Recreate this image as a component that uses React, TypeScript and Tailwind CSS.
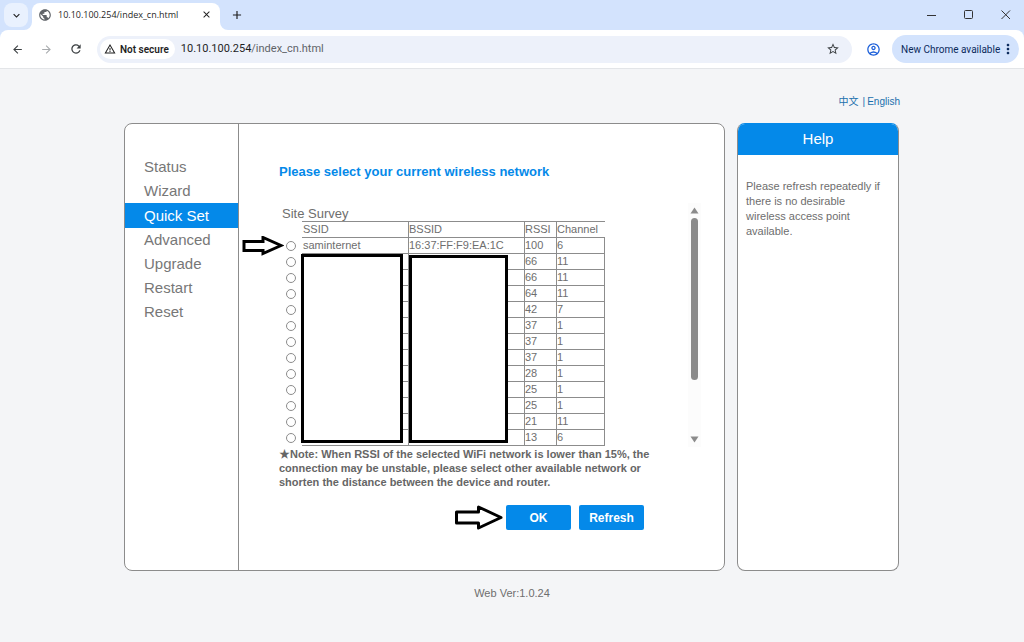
import { Fragment } from "react";
import {
  MdAdd,
  MdArrowBack,
  MdArrowForward,
  MdClose,
  MdKeyboardArrowDown,
  MdMoreVert,
  MdOutlineAccountCircle,
  MdPublic,
  MdRefresh,
  MdStarBorder,
  MdWarningAmber,
} from "react-icons/md";

type Network = {
  ssid: string;
  bssid: string;
  rssi: number;
  channel: number;
};

const menu = ["Status", "Wizard", "Quick Set", "Advanced", "Upgrade", "Restart", "Reset"];

const hidden = (rssi: number, channel: number): Network => ({ ssid: "", bssid: "", rssi, channel });

const networks: Network[] = [
  { ssid: "saminternet", bssid: "16:37:FF:F9:EA:1C", rssi: 100, channel: 6 },
  hidden(66, 11),
  hidden(66, 11),
  hidden(64, 11),
  hidden(42, 7),
  hidden(37, 1),
  hidden(37, 1),
  hidden(37, 1),
  hidden(28, 1),
  hidden(25, 1),
  hidden(25, 1),
  hidden(21, 11),
  hidden(13, 6),
];

const TabStrip = () => (
  <div className="flex h-[30px] items-center bg-[#d3e3fd] pl-1 text-[#1f1f1f]">
    <button aria-label="Search tabs" className="flex size-6 items-center justify-center rounded-lg bg-[#e9f1fe]">
      <MdKeyboardArrowDown size={13} />
    </button>
    <div className="relative ml-1 flex h-[27px] w-[188px] items-center self-end rounded-t-lg bg-white pr-2 pb-1 pl-1.5">
      <svg className="absolute bottom-0 -left-2" width="8" height="8" fill="#fff">
        <path d="M8 0v8H0a8 8 0 0 0 8-8z" />
      </svg>
      <svg className="absolute -right-2 bottom-0" width="8" height="8" fill="#fff">
        <path d="M0 0v8h8a8 8 0 0 1-8-8z" />
      </svg>
      <MdPublic size={14} className="text-[#5f6368]" />
      <span className="ml-1.5 flex-1 font-['Open_Sans',sans-serif] text-[9px] leading-4 whitespace-nowrap">
        10.10.100.254/index_cn.html
      </span>
      <button aria-label="Close tab">
        <MdClose size={11} />
      </button>
    </div>
    <button aria-label="New tab" className="ml-2.5">
      <MdAdd size={14} />
    </button>
    <div className="ml-auto flex items-center gap-[27px] pr-[13px]">
      <button aria-label="Minimize">
        <svg width="10" height="10" stroke="#333" fill="none">
          <path d="M0 5.5h9" />
        </svg>
      </button>
      <button aria-label="Maximize">
        <svg width="10" height="10" stroke="#333" fill="none">
          <rect x="0.5" y="0.5" width="8" height="8" rx="1" />
        </svg>
      </button>
      <button aria-label="Close">
        <svg width="10" height="10" stroke="#333" fill="none">
          <path d="M.5.5l8.5 8.5M9 .5L.5 9" />
        </svg>
      </button>
    </div>
  </div>
);

const Toolbar = () => (
  <div className="bg-[#d3e3fd]">
    <div className="flex h-[39px] items-center rounded-t-lg border-b border-[#e3e5e8] bg-white pr-[5px] pl-[11px] text-[#3c4043]">
      <button aria-label="Back">
        <MdArrowBack size={13} />
      </button>
      <button aria-label="Forward" className="ml-4 text-[#a8abae]">
        <MdArrowForward size={13} />
      </button>
      <button aria-label="Reload" className="ml-4">
        <MdRefresh size={14} />
      </button>
      <div className="ml-3.5 flex h-[27px] flex-1 items-center rounded-full bg-[#edf1fa] pr-3 pl-[3px]">
        <button className="flex h-5 items-center gap-1 rounded-full bg-white pr-1.5 pl-1 text-[10px] font-semibold whitespace-nowrap text-[#1f1f1f]">
          <MdWarningAmber size={12} />
          Not secure
        </button>
        <span className="ml-1.5 flex-1 text-[11px] text-[#5f6368]">
          <span className="text-[#1f1f1f]">10.10.100.254</span>/index_cn.html
        </span>
        <button aria-label="Bookmark">
          <MdStarBorder size={14} />
        </button>
      </div>
      <button aria-label="Profile" className="ml-3.5 text-[#1b5fd9]">
        <MdOutlineAccountCircle size={15} />
      </button>
      <button className="ml-[11px] flex h-7 w-[127px] items-center justify-between rounded-full bg-[#d3e3fd] pr-1 pl-[9px] text-[10px] whitespace-nowrap text-[#0b2a5c]">
        New Chrome available
        <MdMoreVert size={16} className="shrink-0" />
      </button>
    </div>
  </div>
);

const SideMenu = () => (
  <nav className="w-[114px] shrink-0 border-r border-[#8c8c8c] pt-[31px]">
    {menu.map((item) => (
      <a
        key={item}
        href="#"
        className={
          item === "Quick Set"
            ? "block bg-[#0489e9] pl-[19px] text-[15px] leading-[25px] text-white"
            : "block pl-[19px] text-[15px] leading-6 text-[#777]"
        }
      >
        {item}
      </a>
    ))}
  </nav>
);

const Scrollbar = () => (
  <div className="flex w-[13px] flex-col items-center bg-[#fcfcfc] py-1">
    <svg width="9" height="7" fill="#8b8b8b">
      <path d="M4.5 0.5L8.5 6.5h-8z" />
    </svg>
    <div className="mt-1 h-[162px] w-[7px] rounded-full bg-[#8b8b8b]" />
    <svg className="mt-auto" width="9" height="7" fill="#8b8b8b">
      <path d="M4.5 6.5L8.5 0.5h-8z" />
    </svg>
  </div>
);

const SurveyTable = () => (
  <table className="w-[323px] table-fixed border-separate border-spacing-0 text-left text-[11px] leading-[15px]">
    <colgroup>
      <col className="w-5" />
      <col className="w-[106px]" />
      <col className="w-[116px]" />
      <col className="w-8" />
      <col className="w-[49px]" />
    </colgroup>
    <thead>
      <tr>
        <td className="h-4 p-0" />
        <th className="border-y border-[#8c8c8c] p-0 pl-px font-normal">SSID</th>
        <th className="border-y border-l border-[#8c8c8c] p-0 font-normal">BSSID</th>
        <th className="border-y border-l border-[#8c8c8c] p-0 font-normal">RSSI</th>
        <th className="border-y border-l border-[#8c8c8c] p-0 font-normal">Channel</th>
      </tr>
    </thead>
    <tbody>
      {networks.map((network, i) => (
        <tr key={i}>
          <td className="h-4 p-0">
            <input
              type="radio"
              name="network"
              aria-label={network.ssid || `Network ${i + 1}`}
              className="ml-1 block size-[10px] appearance-none rounded-full border border-[#8c8c8c] bg-white"
            />
          </td>
          <td className="border-b border-[#8c8c8c] p-0 pl-px">{network.ssid}</td>
          <td className="border-b border-l border-[#8c8c8c] p-0">{network.bssid}</td>
          <td className="border-b border-l border-[#8c8c8c] p-0">{network.rssi}</td>
          <td className="border-r border-b border-l border-[#8c8c8c] p-0">{network.channel}</td>
        </tr>
      ))}
    </tbody>
  </table>
);

const noteLines = [
  "★Note: When RSSI of the selected WiFi network is lower than 15%, the",
  "connection may be unstable, please select other available network or",
  "shorten the distance between the device and router.",
];

const Survey = () => (
  <section className="min-w-0 flex-1 pt-10 pr-[23px] pb-10 pl-10">
    <h1 className="text-[13px] leading-4 font-bold text-[#0489e9]">Please select your current wireless network</h1>
    <div className="relative mt-[23px] flex justify-between">
      <div className="pt-[3px] pb-px pl-[3px]">
        <h2 className="text-[13px] leading-[15px]">Site Survey</h2>
        <SurveyTable />
      </div>
      <Scrollbar />
      {/* redacted names and addresses */}
      <div className="absolute top-[51px] left-[22px] h-[189px] w-[102px] border-[3px] border-black bg-white" />
      <div className="absolute top-[52px] left-[130px] h-[188px] w-[99px] border-[3px] border-black bg-white" />
      <svg className="absolute top-[33px] -left-[37px]" width="42" height="20" fill="#fff" stroke="#000" strokeWidth="3">
        <path d="M2 5.5h19v-4L39 9.5 21 17.5v-3H2z" />
      </svg>
    </div>
    <p className="text-[11px] leading-[14px] font-bold whitespace-nowrap text-[#666]">
      {noteLines.map((line) => (
        <Fragment key={line}>
          {line}
          <br />
        </Fragment>
      ))}
    </p>
    <div className="mt-4 flex justify-end gap-2 pr-[57px] text-[12px] font-bold text-white">
      <div className="relative">
        <button className="h-[25px] w-[65px] rounded-xs bg-[#0489e9]">OK</button>
        <svg className="absolute top-0 -left-[52px]" width="50" height="26" fill="#fff" stroke="#000" strokeWidth="3">
          <path d="M2.5 7h22V2L47 12.5 24.5 23v-5h-22z" strokeLinejoin="round" />
        </svg>
      </div>
      <button className="h-[25px] w-[65px] rounded-xs bg-[#0489e9]">Refresh</button>
    </div>
  </section>
);

const Help = () => (
  <aside className="flex w-[162px] shrink-0 flex-col overflow-hidden rounded-lg border border-[#0489e9] border-x-[#8c8c8c] border-b-[#8c8c8c] bg-white">
    <h2 className="bg-[#0489e9] text-center text-[15px] leading-[30px] text-white outline outline-[#0489e9]">Help</h2>
    <p className="pt-[25px] pr-3 pl-2 text-[11px] leading-[15px]">
      Please refresh repeatedly if there is no desirable wireless access point available.
    </p>
  </aside>
);

const App = () => {
  return (
    <div className="min-h-screen bg-[#f4f5f7]">
      <header className="font-[Roboto,'Noto_Sans',sans-serif]">
        <TabStrip />
        <Toolbar />
      </header>
      <main className="mx-auto max-w-[776px] font-['Liberation_Sans','Noto_Sans_CJK_SC',sans-serif] text-[#6e6e6e]">
        <div className="flex h-[54px] items-center justify-end pt-2.5 text-[10px] text-[#1a70ad]">
          <a href="#">中文</a>
          <span className="mr-0.5 ml-1">|</span>
          <a href="#">English</a>
        </div>
        <div className="flex gap-3 pr-px">
          <div className="flex flex-1 overflow-hidden rounded-lg border border-[#8c8c8c] bg-white">
            <SideMenu />
            <Survey />
          </div>
          <Help />
        </div>
        <footer className="pt-[14px] text-center text-[11px] leading-4">Web Ver:1.0.24</footer>
      </main>
    </div>
  );
};

export default App;
